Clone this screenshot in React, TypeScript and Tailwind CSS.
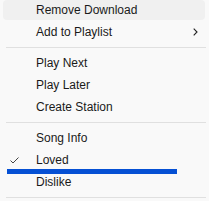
import React from 'react';

type Item = { label: string; checked?: boolean; submenu?: boolean; hover?: boolean };

const sections: Item[][] = [
  [{ label: 'Remove Download', hover: true }, { label: 'Add to Playlist', submenu: true }],
  [{ label: 'Play Next' }, { label: 'Play Later' }, { label: 'Create Station' }],
  [{ label: 'Song Info' }, { label: 'Loved', checked: true }, { label: 'Dislike' }],
];

const MenuRow = ({ item }: { item: Item }) => (
  <div className="relative h-[22px] flex items-center">
    {item.hover && <div className="absolute left-[3px] right-[4px] top-[1px] bottom-[1px] rounded-[4px] bg-[#f0f0f0]" />}
    <div className="relative w-[36px] h-full flex items-center pl-[10px]">
      {item.checked && (
        <svg width="9" height="7" viewBox="0 0 9 7" fill="none" stroke="#444" strokeWidth="1">
          <path d="M0.5 3.5 L3 6 L8.5 0.5" />
        </svg>
      )}
    </div>
    <span className="relative flex-1">{item.label}</span>
    {item.submenu && (
      <svg className="relative mr-[11px]" width="5" height="8" viewBox="0 0 5 8" fill="none" stroke="#222" strokeWidth="1.1">
        <path d="M0.7 0.7 L4 4 L0.7 7.3" />
      </svg>
    )}
  </div>
);

export default function App() {
  return (
    <div
      className="relative w-[209px] h-[201px] overflow-hidden bg-[#f9f9f9] text-[12px] text-[#1a1a1a]"
      style={{ fontFamily: '"Segoe UI", "Liberation Sans", Arial, sans-serif' }}
    >
      <div className="-mt-[1px] flex flex-col">
        {sections.map((sec, i) => (
          <div key={i} className="flex flex-col">
            {sec.map((item) => (
              <MenuRow key={item.label} item={item} />
            ))}
            <div className="my-[4px] ml-[6px] mr-[3px] h-px bg-[#e0e0e0]" />
          </div>
        ))}
      </div>
      <div className="absolute left-[7px] top-[169px] w-[170px] h-[5px] bg-[#0550d4]" />
    </div>
  );
}
